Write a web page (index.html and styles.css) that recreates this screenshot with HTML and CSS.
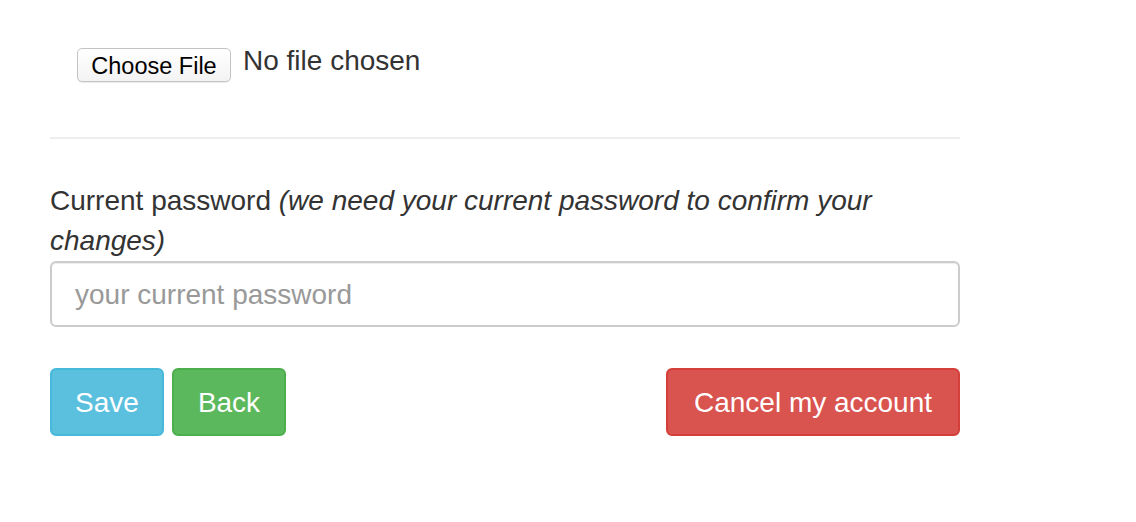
FILE: index.html
```html
<!DOCTYPE html>
<html>
<head>
<meta charset="utf-8">
<link rel="stylesheet" href="styles.css">
</head>
<body>
<div class="container">
  <div class="file-row">
    <span class="file-btn">Choose File</span>
    <span class="file-status">No file chosen</span>
  </div>
  <hr class="divider">
  <div class="field">
    <label class="label">Current password <em>(we need your current password to confirm your changes)</em></label>
    <input class="input" type="password" placeholder="your current password">
  </div>
  <div class="actions">
    <div class="left">
      <button class="btn btn-info">Save</button>
      <button class="btn btn-success">Back</button>
    </div>
    <button class="btn btn-danger">Cancel my account</button>
  </div>
</div>
</body>
</html>
```
FILE: styles.css
```css
* { box-sizing: border-box; }
html, body { margin: 0; padding: 0; background: #fff; }
body { font-family: "Liberation Sans", Arial, sans-serif; color: #333; }
.container { width: 910px; margin-left: 50px; padding-top: 48px; }
.file-row { display: flex; align-items: flex-start; padding-left: 27px; height: 34px; }
.file-btn {
  display: inline-flex; align-items: center; justify-content: center;
  width: 154px; height: 34px; border: 1px solid #c4c4c4; border-radius: 5px;
  background: linear-gradient(#fff, #f3f3f3); font-size: 23.5px; color: #000;
  box-shadow: 0 1px 1px rgba(0,0,0,0.08); padding-top: 3px;
}
.file-status { font-size: 28px; margin-left: 12px; line-height: 28px; margin-top: -1px; color: #333; }
.divider { border: 0; border-top: 2px solid #eee; margin: 55px 0 0 0; height: 0; }
.field { margin-top: 41px; }
.label { display: block; font-size: 28px; line-height: 40px; color: #333; padding-top: 1px; }
.label em { font-style: italic; }
.input {
  display: block; width: 910px; height: 66px; margin-top: 0;
  border: 2px solid #ccc; border-radius: 6px; padding: 2px 23px 0;
  font-family: inherit; font-size: 28px; color: #555; outline: none;
  box-shadow: inset 0 1px 1px rgba(0,0,0,0.075);
}
.input::placeholder { color: #999; }
.actions { display: flex; justify-content: space-between; margin-top: 41px; }
.left { display: flex; gap: 8px; }
.btn {
  height: 68px; border: 2px solid transparent; border-radius: 6px; color: #fff;
  font-family: inherit; font-size: 28px; padding: 2px 0 0; cursor: pointer;
}
.btn-info { background: #5bc0de; border-color: #46b8da; width: 114px; }
.btn-success { background: #5cb85c; border-color: #4cae4c; width: 114px; }
.btn-danger { background: #d9534f; border-color: #d43f3a; width: 294px; }
```
